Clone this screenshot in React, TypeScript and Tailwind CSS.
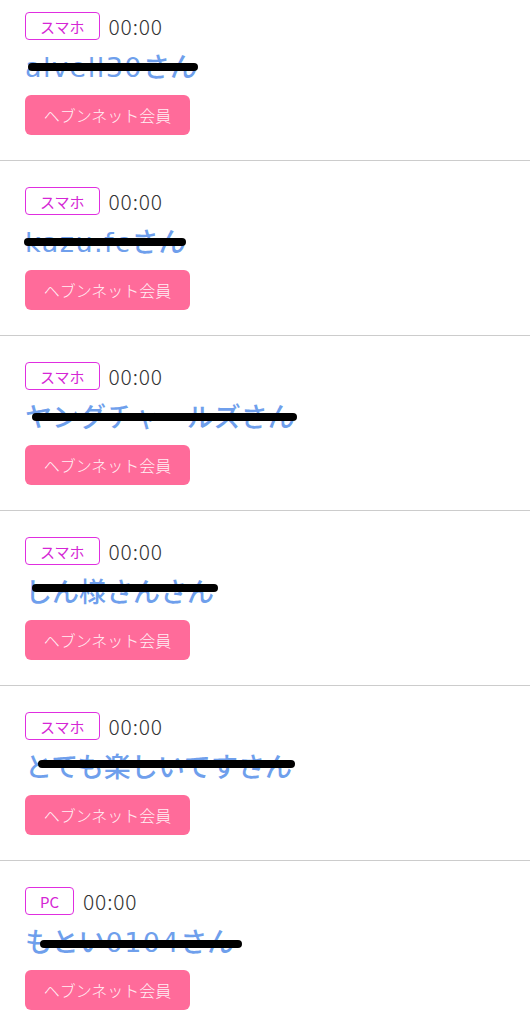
import React from "react";

type Entry = {
  device: string;
  name: string;
  strike: { left: number; width: number; top: number };
};

const entries: Entry[] = [
  { device: "スマホ", name: "alvell30さん", strike: { left: 3, width: 170, top: 13 } },
  { device: "スマホ", name: "kazu.fcさん", strike: { left: -1, width: 162, top: 13 } },
  { device: "スマホ", name: "ヤングチャールズさん", strike: { left: 7, width: 265, top: 13 } },
  { device: "スマホ", name: "しん様さんさん", strike: { left: 7, width: 186, top: 9 } },
  { device: "スマホ", name: "とても楽しいですさん", strike: { left: 13, width: 257, top: 10 } },
  { device: "PC", name: "もとい0104さん", strike: { left: 15, width: 202, top: 15 } },
];

const font = { fontFamily: '"Noto Sans CJK JP", "Noto Sans", sans-serif' };

function Name({ text }: { text: string }) {
  const parts = text.split(/([A-Za-z0-9.]+)/).filter((p) => p.length > 0);
  return (
    <>
      {parts.map((p, i) =>
        /^[A-Za-z0-9.]+$/.test(p) ? (
          <span
            key={i}
            className="tracking-[1.5px] text-[27px]"
            style={{ fontFamily: '"DejaVu Sans", "Noto Sans CJK JP", sans-serif' }}
          >
            {p}
          </span>
        ) : (
          <span key={i}>{p}</span>
        )
      )}
    </>
  );
}

export default function App() {
  return (
    <div className="w-[530px] bg-white overflow-hidden" style={font}>
      <div className="-mt-[14px]">
        {entries.map((e, i) => (
          <div key={i} className="border-b border-[#cccccc] pl-[25px] pt-[26px] pb-[25px]">
            <div className="flex items-center h-[28px]">
              <span className="flex items-center justify-center h-[28px] px-[14px] border-[1.5px] border-[#e02ee0] rounded-[4px] text-[15px] leading-none text-[#d526d5]">
                {e.device}
              </span>
              <span className="ml-[9px] text-[21px] tracking-[0.8px] font-light text-[#333333] leading-none">
                00:00
              </span>
            </div>
            <div className="relative mt-[10px] h-[32px] leading-[32px] text-[27px] font-medium text-[#6f9fec] whitespace-nowrap">
              <Name text={e.name} />
              <div
                className="absolute h-[8px] rounded-full bg-black"
                style={{ left: e.strike.left, width: e.strike.width, top: e.strike.top }}
              />
            </div>
            <div className="mt-[13px] flex items-center justify-center w-[165px] h-[40px] rounded-[6px] bg-[#ff6b9a] text-[16px] font-light text-[#fff0f5]">
              ヘブンネット会員
            </div>
          </div>
        ))}
      </div>
    </div>
  );
}
